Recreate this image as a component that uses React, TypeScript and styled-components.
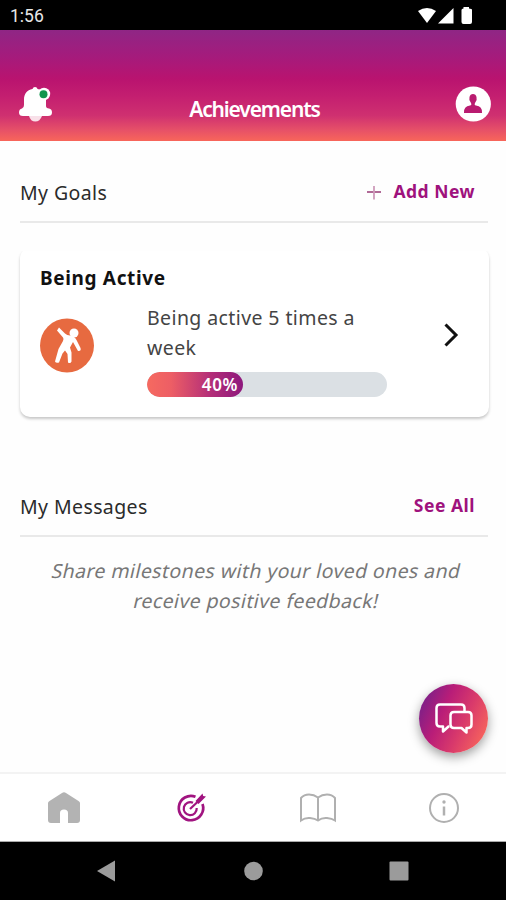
import React from "react";
import styled, { createGlobalStyle } from "styled-components";

const GlobalStyle = createGlobalStyle`
  * { box-sizing: border-box; }
  body { margin: 0; background: #fff; }
`;

const Screen = styled.div`
  width: 506px;
  height: 900px;
  display: flex;
  flex-direction: column;
  position: relative;
  overflow: hidden;
  background: #fefefe;
  color: #2b2b2b;
  font-family: "Noto Sans", "Open Sans", sans-serif;
  white-space: nowrap;

  svg { display: block; flex: none; }
`;

const StatusBar = styled.div`
  height: 30px;
  flex: none;
  padding: 2px 32px 0 10px;
  display: flex;
  align-items: center;
  justify-content: space-between;
  background: #000;
  color: #e8e8e8;
  font: 400 17.5px/28px Roboto, sans-serif;
`;

const Header = styled.header`
  height: 111px;
  flex: none;
  padding: 56px 15px 0 18px;
  display: grid;
  grid-template-columns: 36px 1fr 36px;
  align-items: start;
  background: linear-gradient(#8f2685 0%, #a51b7c 24%, #b9136f 44%, #c41f70 60%, #cf3070 77%, #e65068 90%, #f8665a 100%);
`;

const Title = styled.h1`
  margin: 8px 0 0;
  text-align: center;
  color: #fff;
  font-size: 21px;
  font-weight: 600;
  line-height: 30px;
  letter-spacing: -1.15px;
`;

const Content = styled.main`
  height: 631px;
  flex: none;
  padding: 0 18px 0 20px;
`;

const SectionHead = styled.div<{ $top: number }>`
  height: ${(p) => p.$top + 37}px;
  padding: ${(p) => p.$top}px 13px 0 0;
  display: flex;
  justify-content: space-between;
  border-bottom: 2px solid #e9e9e9;
`;

const SectionTitle = styled.h2`
  margin: 0;
  font-size: 19.5px;
  font-weight: 400;
  line-height: 13px;
  letter-spacing: 0.4px;
`;

const Action = styled.a`
  display: flex;
  gap: 12px;
  color: #9f127d;
  font-size: 17.5px;
  font-weight: 700;
  line-height: 10px;
  letter-spacing: 0.5px;
`;

const Card = styled.article`
  height: 169px;
  margin: 25px -1px 0 0;
  padding: 17px 29px 0 20px;
  border-radius: 10px;
  background: #fff;
  box-shadow: 0 2px 3px rgba(0, 0, 0, 0.22);
  clip-path: inset(3px -4px -8px -4px);
`;

const CardTitle = styled.h3`
  margin: 0;
  color: #111;
  font-size: 19px;
  font-weight: 700;
  line-height: 26px;
  letter-spacing: 0.65px;
`;

const CardBody = styled.div`
  display: grid;
  grid-template-columns: 107px 240px 1fr;
`;

const GoalIcon = styled.svg`
  margin-top: 27px;
`;

const GoalText = styled.p`
  margin: 12px 0 9px;
  color: #444;
  font-size: 19.5px;
  line-height: 29.5px;
  letter-spacing: 0.4px;
`;

const Chevron = styled.svg`
  margin: 32px 0 0 auto;
`;

const Track = styled.div`
  height: 25px;
  margin-top: 10px;
  border-radius: 13px;
  overflow: hidden;
  background: #dbe0e4;
`;

const Fill = styled.div`
  height: 100%;
  padding-right: 5px;
  border-radius: 13px;
  background: linear-gradient(90deg, #f66a60 0%, #ed5e65 25%, #b52f78 65%, #8d187d 100%);
  color: #fff;
  text-align: right;
  font-size: 17px;
  font-weight: 600;
  line-height: 26px;
  letter-spacing: 0.6px;
`;

const Message = styled.p`
  margin: 19px 0 0 5px;
  color: #777;
  font-size: 19.5px;
  line-height: 29.5px;
  letter-spacing: 0.4px;
  text-align: center;
`;

const SlantedLine = styled.span`
  display: block;
  transform: skewX(-13deg);
`;

const ChatButton = styled.button`
  position: absolute;
  right: 18px;
  top: 684px;
  width: 69px;
  height: 69px;
  padding: 0;
  display: grid;
  place-items: center;
  border: 0;
  border-radius: 50%;
  background: linear-gradient(115deg, #70208b 5%, #b91d78 36%, #d93a6b 62%, #ff7058 98%);
  box-shadow: 0 4px 11px rgba(0, 0, 0, 0.38);
`;

const Tabs = styled.nav`
  height: 70px;
  flex: none;
  padding-left: 1px;
  display: grid;
  grid-template-columns: repeat(4, 126.7px);
  place-items: center;
  border-top: 2px solid #f3f3f3;
  border-bottom: 1px solid #aaa;
  background: #fff;
`;

const SystemBar = styled.div`
  height: 58px;
  flex: none;
  padding: 0 34px;
  display: grid;
  grid-template-columns: repeat(3, 146px);
  place-items: center;
  background: #000;
`;

const progress = 40;

export default function App() {
  return (
    <>
      <GlobalStyle />
      <Screen>
        <StatusBar>
          <span>1:56</span>
          <svg width="56" height="18" viewBox="0 0 56 18" fill="#fff">
            <path d="M0 4Q9-2 18 4L9 16Z" />
            <path d="M20 16.5 35.500 1V16.500Z" />
            <path d="M43.500 3Q43.500 1.500 45.500 1.500V0H51V1.500Q54 1.500 54 3V15Q54 17 52 17H45.500Q43.500 17 43.500 15Z" />
          </svg>
        </StatusBar>
        <Header>
          <svg width="36" height="37" viewBox="0 0 36 37">
            <path fill="#fff" d="M14.500 3Q15 1 17 1T19.600 3C25 4 28 8 28 13.500V20Q28 22 31 22.500Q34 23 34 26.500Q34 30 30 30H5Q1 30 1 26.500Q1 23 4 22.500Q6 22 6 19V13.500C6 8 9 4 14.500 3Z" />
            <path fill="#fff" fillOpacity=".85" d="M11 30H24Q22 35.500 17.300 35.500T11 30Z" />
            <circle cx="26" cy="8" r="6.200" fill="#fff" />
            <circle cx="25.500" cy="8.300" r="4" fill="#11964e" />
          </svg>
          <Title>Achievements</Title>
          <svg width="36" height="37" viewBox="0 0 36 37">
            <circle cx="18.300" cy="18" r="17.600" fill="#fff" />
            <path fill="#b91b70" d="M9 27Q8.500 20 15 19.500Q17 19 16 17Q13.500 14 14.500 11Q15.200 8 18 8T21.500 11Q22.500 14 20 17Q19 19 21 19.500Q27.500 20 27 27Z" />
          </svg>
        </Header>
        <Content>
          <SectionHead $top={45}>
            <SectionTitle>My Goals</SectionTitle>
            <Action>
              <svg width="14" height="15" viewBox="0 0 14 15" fill="none" strokeWidth="1.800">
                <path stroke="#a95a8c" d="M0 6H14" />
                <path stroke="#cf9cbb" d="M7 0V13.500" />
              </svg>
              Add New
            </Action>
          </SectionHead>
          <Card>
            <CardTitle>Being Active</CardTitle>
            <CardBody>
              <GoalIcon width="54" height="55" viewBox="0 0 54 55">
                <circle cx="27" cy="27.500" r="27" fill="#e76a40" />
                <circle cx="34" cy="15" r="4.500" fill="#fff" />
                <path fill="#fff" d="M19 9.500 17 12.500 23 19.500Q24 20.500 23 23L18.500 31 15 43.500Q16 45.500 19 44.500L22.500 35.500 25 32.500 27.500 36 28 44.500Q30.500 46 31.500 43.500V34.500L30 29.500 33 24 38 33Q41.500 33.500 40.500 30L36.500 22Q34.500 18 30 17.500Q27 17.500 25 15.500Z" />
              </GoalIcon>
              <div>
                <GoalText>Being active 5 times a<br />week</GoalText>
                <Track>
                  <Fill style={{ width: `${progress}%` }}>{progress}%</Fill>
                </Track>
              </div>
              <Chevron width="16" height="24" viewBox="0 0 16 24">
                <path d="M1.500 1.500 12 12 1.500 22.500" fill="none" stroke="#111" strokeWidth="3" />
              </Chevron>
            </CardBody>
          </Card>
          <SectionHead $top={83}>
            <SectionTitle>My Messages</SectionTitle>
            <Action>See All</Action>
          </SectionHead>
          <Message>
            <SlantedLine>Share milestones with your loved ones and</SlantedLine>
            <SlantedLine>receive positive feedback!</SlantedLine>
          </Message>
        </Content>
        <Tabs>
          <svg width="32" height="32" viewBox="0 0 32 32" fill="#b3b3b3">
            <path d="M0 11Q0 10 1.500 9L14 1Q16-.4 18 1L30.500 9Q32 10 32 11V28Q32 31 29 31H20V21Q20 17.500 16 17.500T12 21V31H3Q0 31 0 28Z" />
          </svg>
          <svg width="32" height="32" viewBox="0 0 32 32" fill="none" stroke="#a11480" strokeWidth="2.700">
            <path d="M20.500 4.700A12.200 12.200 0 1 0 27.500 12" />
            <path d="M18 10.700A6.500 6.500 0 1 0 21.700 16" strokeWidth="2.200" />
            <path d="M15 17 23 9.500" strokeWidth="2.200" />
            <path d="M20.500 9 27.500 1.500 28.200 4 31 4.500 23.500 12Z" fill="#a11480" stroke="none" />
          </svg>
          <svg width="36" height="32" viewBox="0 0 36 32" fill="none" stroke="#b0b0b0" strokeWidth="2">
            <path d="M18 5.500Q14 2.500 9 2.500T1 6V28.500Q5 25.500 10 26T18 28.500Q22 25.500 27 26T35 28.500V6Q32 2.500 27 2.500T18 5.500V28" />
          </svg>
          <svg width="32" height="32" viewBox="0 0 32 32" fill="none" stroke="#b0b0b0" strokeWidth="2">
            <circle cx="16" cy="16" r="14" />
            <path d="M16 14.500V23.500" strokeWidth="2.500" />
            <circle cx="16" cy="10" r="1.700" fill="#b0b0b0" stroke="none" />
          </svg>
        </Tabs>
        <SystemBar>
          <svg width="20" height="22" viewBox="0 0 20 22" fill="#9b9b9b"><path d="M0 11 18 .5V21.500Z" /></svg>
          <svg width="20" height="20" viewBox="0 0 20 20" fill="#9b9b9b"><circle cx="10.500" cy="10" r="9.300" /></svg>
          <svg width="20" height="20" viewBox="0 0 20 20" fill="#9b9b9b"><rect x=".5" y=".5" width="19" height="19" rx="1" /></svg>
        </SystemBar>
        <ChatButton aria-label="Chat">
          <svg width="38" height="32" viewBox="0 0 38 32" fill="none" stroke="#fff" strokeWidth="2.500" strokeLinejoin="round">
            <path d="M29.500 9V5Q29.500 1.500 26 1.500H5Q1.500 1.500 1.500 5V20Q1.500 23.500 5 23.500H8V28.500L13.500 23.500H14.500" />
            <path d="M19 9H33Q36.500 9 36.500 12.500V21.500Q36.500 25 33 25H31.500V29.500L26.500 25H19Q15.500 25 15.500 21.500V12.500Q15.500 9 19 9Z" />
          </svg>
        </ChatButton>
      </Screen>
    </>
  );
}
